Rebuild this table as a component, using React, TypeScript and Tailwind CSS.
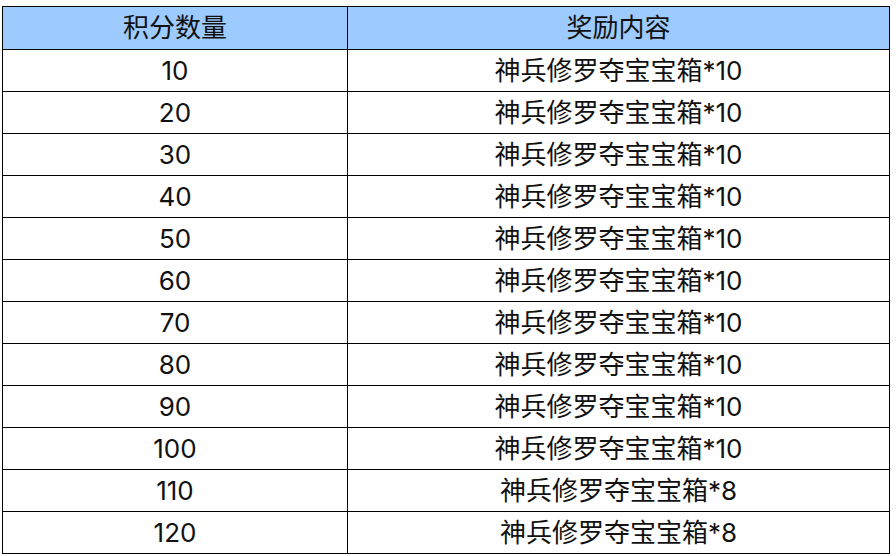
import React from "react";

const rows = [
  { score: 10, reward: "神兵修罗夺宝宝箱*10" },
  { score: 20, reward: "神兵修罗夺宝宝箱*10" },
  { score: 30, reward: "神兵修罗夺宝宝箱*10" },
  { score: 40, reward: "神兵修罗夺宝宝箱*10" },
  { score: 50, reward: "神兵修罗夺宝宝箱*10" },
  { score: 60, reward: "神兵修罗夺宝宝箱*10" },
  { score: 70, reward: "神兵修罗夺宝宝箱*10" },
  { score: 80, reward: "神兵修罗夺宝宝箱*10" },
  { score: 90, reward: "神兵修罗夺宝宝箱*10" },
  { score: 100, reward: "神兵修罗夺宝宝箱*10" },
  { score: 110, reward: "神兵修罗夺宝宝箱*8" },
  { score: 120, reward: "神兵修罗夺宝宝箱*8" },
];

export default function App() {
  return (
    <div
      className="w-[896px] h-[556px] bg-white pt-[6px] pl-[2px]"
      style={{ fontFamily: 'Inter, "Noto Sans CJK SC", sans-serif' }}
    >
      <table className="w-[888px] border-collapse text-[26px] text-[#111] table-fixed">
        <colgroup>
          <col className="w-[345px]" />
          <col />
        </colgroup>
        <thead>
          <tr className="h-[43px] bg-[#9ecbff]">
            <th className="border border-black font-normal leading-none">积分数量</th>
            <th className="border border-black font-normal leading-none">奖励内容</th>
          </tr>
        </thead>
        <tbody>
          {rows.map((r) => (
            <tr key={r.score} className="h-[42px]">
              <td className="border border-black text-center leading-none">{r.score}</td>
              <td className="border border-black text-center leading-none">{r.reward}</td>
            </tr>
          ))}
        </tbody>
      </table>
    </div>
  );
}
